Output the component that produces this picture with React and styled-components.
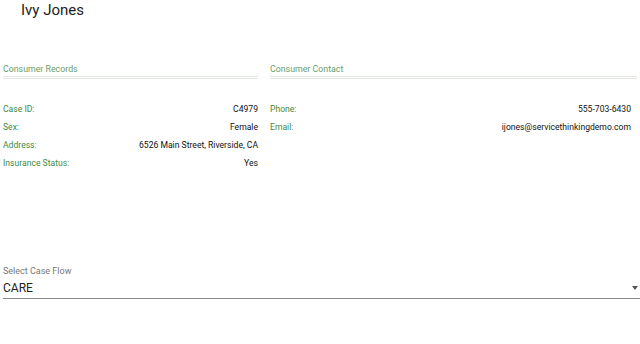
import React from 'react';
import styled, { createGlobalStyle } from 'styled-components';

const GlobalStyle = createGlobalStyle`
  html, body {
    margin: 0;
    padding: 0;
    background: #ffffff;
    font-family: Roboto, "Liberation Sans", Arial, sans-serif;
  }
`;

const Page = styled.div`
  width: 640px;
  height: 344px;
  box-sizing: border-box;
  padding: 0 0 0 3px;
  display: flex;
  flex-direction: column;
  overflow: hidden;
`;

const Title = styled.h1`
  margin: 0;
  padding: 1px 0 0 18px;
  font-size: 15px;
  font-weight: 400;
  line-height: 18px;
  color: #222;
`;

const Columns = styled.div`
  display: grid;
  grid-template-columns: 255px 1fr;
  column-gap: 12px;
  margin-top: 44px;
  padding-right: 3px;
`;

const Section = styled.section`
  display: flex;
  flex-direction: column;
`;

const SectionHeader = styled.div`
  font-size: 8.8px;
  line-height: 12px;
  color: #6b9e6b;
  padding-bottom: 1px;
  border-bottom: 3px double #e3e8e3;
  margin-bottom: 21px;
`;

const Row = styled.div`
  display: flex;
  justify-content: space-between;
  align-items: center;
  height: 18px;
  font-size: 8.6px;
  padding-right: ${p => p.$inset || 0}px;
`;

const Label = styled.span`
  color: #3f8a3f;
`;

const Value = styled.span`
  color: #111;
`;

const SelectField = styled.div`
  margin-top: auto;
  margin-bottom: 45px;
  display: flex;
  flex-direction: column;
`;

const SelectLabel = styled.label`
  font-size: 9px;
  line-height: 11px;
  color: #777;
  margin-bottom: 1px;
`;

const SelectBox = styled.div`
  display: flex;
  align-items: center;
  justify-content: space-between;
  height: 20px;
  border-bottom: 1px solid #8a8a8a;
  font-size: 12px;
  color: #222;
`;

const Arrow = styled.span`
  width: 0;
  height: 0;
  margin-right: 2px;
  border-left: 3.5px solid transparent;
  border-right: 3.5px solid transparent;
  border-top: 4px solid #555;
`;

const records = [
  ['Case ID:', 'C4979'],
  ['Sex:', 'Female'],
  ['Address:', '6526 Main Street, Riverside, CA'],
  ['Insurance Status:', 'Yes'],
];

const contact = [
  ['Phone:', '555-703-6430'],
  ['Email:', 'ijones@servicethinkingdemo.com'],
];

export default function App() {
  return (
    <>
      <GlobalStyle />
      <Page>
        <Title>Ivy Jones</Title>
        <Columns>
          <Section>
            <SectionHeader>Consumer Records</SectionHeader>
            {records.map(([k, v]) => (
              <Row key={k}>
                <Label>{k}</Label>
                <Value>{v}</Value>
              </Row>
            ))}
          </Section>
          <Section>
            <SectionHeader>Consumer Contact</SectionHeader>
            {contact.map(([k, v]) => (
              <Row key={k} $inset={6}>
                <Label>{k}</Label>
                <Value>{v}</Value>
              </Row>
            ))}
          </Section>
        </Columns>
        <SelectField>
          <SelectLabel>Select Case Flow</SelectLabel>
          <SelectBox>
            CARE
            <Arrow />
          </SelectBox>
        </SelectField>
      </Page>
    </>
  );
}
